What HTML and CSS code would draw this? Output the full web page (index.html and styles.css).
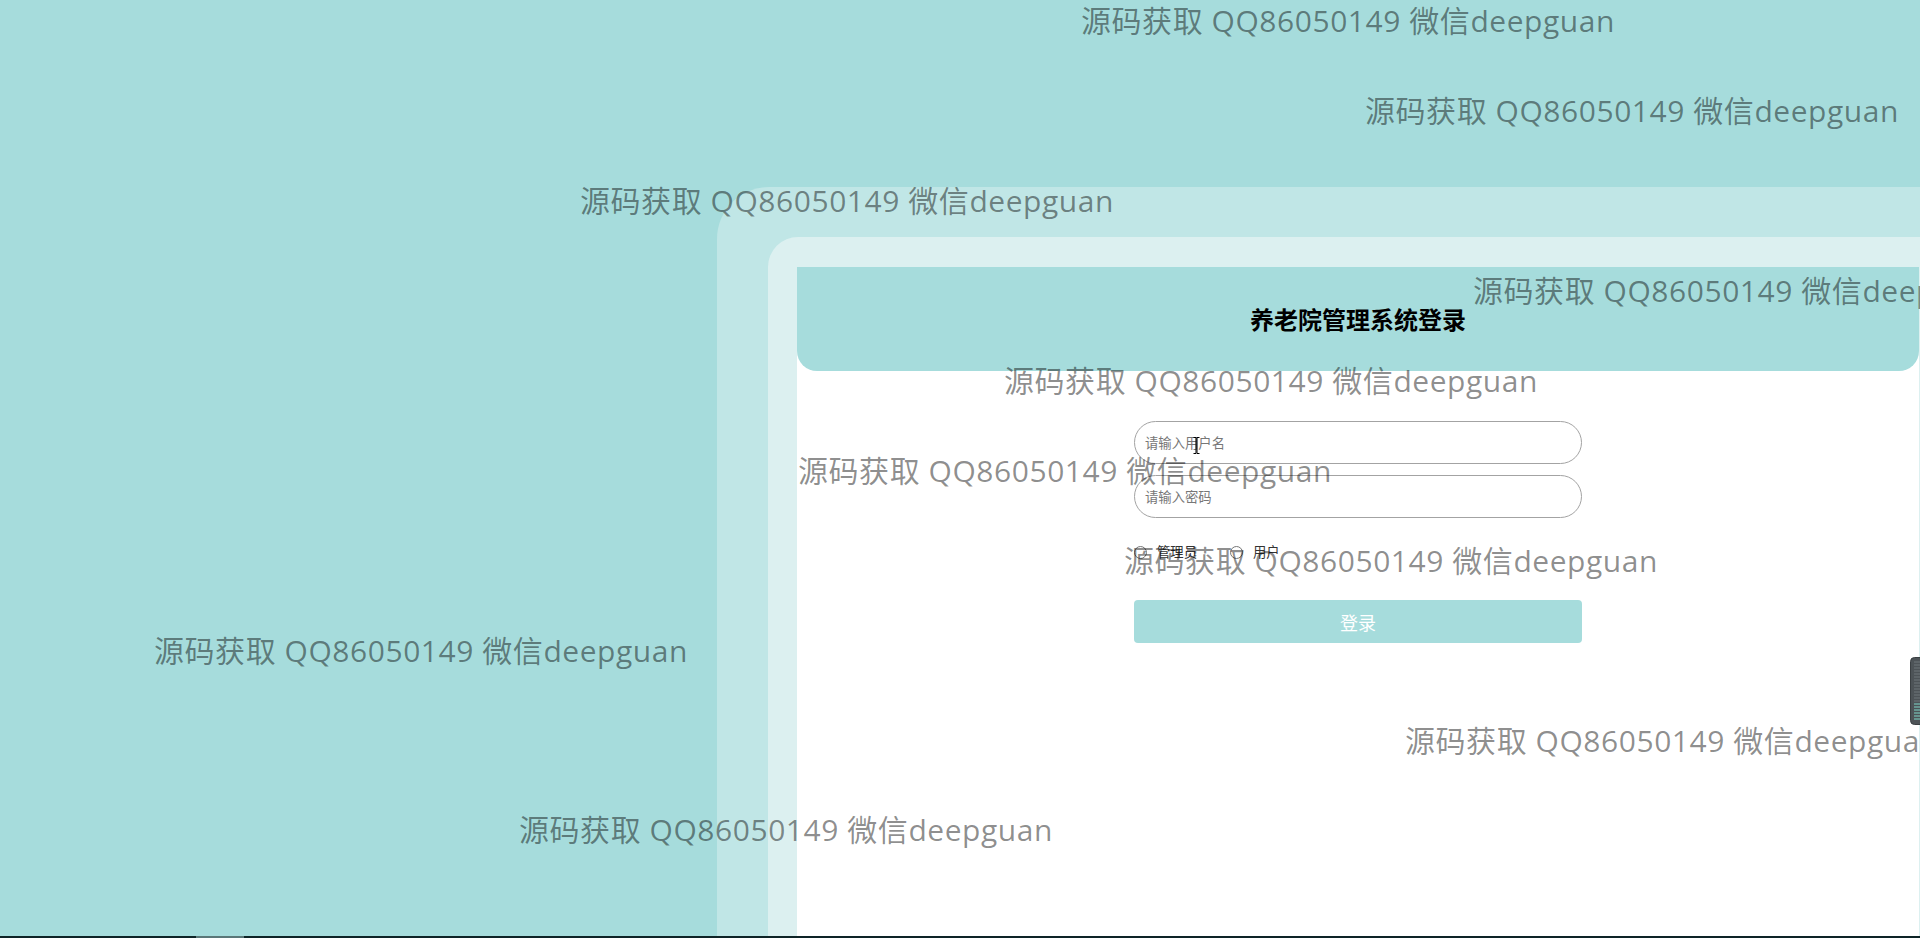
FILE: index.html
```html
<!DOCTYPE html>
<html lang="zh-CN">
<head>
<meta charset="utf-8">
<title>养老院管理系统登录</title>
<link rel="stylesheet" href="styles.css">
</head>
<body>
<div class="page">
  <div class="frame-outer">
    <div class="frame-inner">
      <div class="card">
        <div class="card-head"><h2 class="title">养老院管理系统登录</h2></div>
        <form class="login-form">
          <input class="field" type="text" placeholder="请输入用户名">
          <input class="field" type="password" placeholder="请输入密码">
          <div class="roles">
            <label class="role"><input class="radio" type="radio" name="role"><span>管理员</span></label>
            <label class="role"><input class="radio" type="radio" name="role"><span>用户</span></label>
          </div>
          <button class="submit" type="button">登录</button>
        </form>
      </div>
    </div>
  </div>
</div>

<div class="watermarks">
  <span class="wm wm1">源码获取 QQ86050149 微信deepguan</span>
  <span class="wm wm2">源码获取 QQ86050149 微信deepguan</span>
  <span class="wm wm3">源码获取 QQ86050149 微信deepguan</span>
  <span class="wm wm4">源码获取 QQ86050149 微信deepguan</span>
  <span class="wm wm5">源码获取 QQ86050149 微信deepguan</span>
  <span class="wm wm6">源码获取 QQ86050149 微信deepguan</span>
  <span class="wm wm7">源码获取 QQ86050149 微信deepguan</span>
  <span class="wm wm8">源码获取 QQ86050149 微信deepguan</span>
  <span class="wm wm9">源码获取 QQ86050149 微信deepguan</span>
  <span class="wm wm10">源码获取 QQ86050149 微信deepguan</span>
</div>

<svg class="cursor" width="7" height="17" viewBox="0 0 7 17">
  <path d="M0.5 0.5h2.5v16h-2.5M6.5 0.5h-2.5v16h2.5" fill="none" stroke="#000" stroke-width="1"/>
</svg>

<svg class="side-widget" width="10" height="68" viewBox="0 0 10 68">
  <rect x="0.5" y="0.5" width="14" height="67" rx="4" fill="#4d5357" stroke="#3a3f42"/>
  <g stroke="#6f767b" stroke-width="1">
    <path d="M4 5h6M4 8h6M4 11h6M4 14h6M4 17h6M4 20h6M4 23h6M4 26h6M4 29h6M4 32h6M4 35h6M4 38h6M4 41h6M4 44h6"/>
  </g>
  <g stroke="#7fd6c8" stroke-width="1">
    <path d="M4 47h6M4 50h6M4 53h6M4 56h6M4 59h6M4 62h6"/>
  </g>
</svg>

<div class="taskbar-edge"><span class="taskbar-mark"></span></div>
</body>
</html>
```

FILE: styles.css
```css
html, body {
  margin: 0;
  padding: 0;
}

body {
  width: 1920px;
  height: 938px;
  overflow: hidden;
  position: relative;
  background: #a6dcdc;
  font-family: "Noto Sans CJK SC", "Noto Sans", sans-serif;
}

.page {
  box-sizing: border-box;
  width: 1920px;
  height: 938px;
  overflow: hidden;
  padding: 187px 0 0 717px;
}

.frame-outer {
  width: 1282px;
  box-sizing: border-box;
  background: #c0e6e6;
  border-top-left-radius: 52px;
  padding: 50px 50px 0 51px;
}

.frame-inner {
  background: #dcf0f0;
  border-top-left-radius: 30px;
  padding: 30px 30px 0 29px;
}

.card {
  width: 1122px;
  min-height: 720px;
  background: #ffffff;
}

.card-head {
  height: 104px;
  background: #a6dcdc;
  border-radius: 0 0 20px 20px;
  display: flex;
  align-items: center;
  justify-content: center;
}

.title {
  margin: 0;
  font-size: 24px;
  font-weight: 700;
  color: #000;
  line-height: 1;
}

.login-form {
  width: 448px;
  margin: 50px auto 0;
  display: flex;
  flex-direction: column;
}

.field {
  box-sizing: border-box;
  height: 43px;
  margin: 0 0 11px;
  padding: 0 10px;
  border: 1px solid #a3a3a3;
  border-radius: 22px;
  font-family: "Noto Sans CJK SC", sans-serif;
  font-size: 13.333px;
  color: #333;
  background: #fff;
  outline: none;
}

.field::placeholder {
  color: #777;
}

.roles {
  display: flex;
  align-items: center;
  height: 14px;
  margin-top: 16px;
}

.role {
  display: flex;
  align-items: center;
  font-size: 13.333px;
  line-height: 14px;
  color: #333;
}

.role + .role {
  margin-left: 33px;
}

.radio {
  appearance: none;
  -webkit-appearance: none;
  box-sizing: border-box;
  width: 13px;
  height: 13px;
  margin: 0 10px 0 0;
  border: 1px solid #767676;
  border-radius: 50%;
  background: #fff;
}

.submit {
  height: 43px;
  margin-top: 41px;
  border: 0;
  border-radius: 4px;
  background: #a6dcdc;
  color: #fff;
  font-family: "Noto Sans CJK SC", sans-serif;
  font-size: 18px;
  cursor: pointer;
}

.watermarks {
  position: absolute;
  inset: 0;
  pointer-events: none;
}

.wm {
  position: absolute;
  white-space: nowrap;
  font-family: "Open Sans", "Noto Sans CJK SC", sans-serif;
  font-size: 30px;
  line-height: 30px;
  letter-spacing: 0.55px;
  color: rgba(0, 0, 0, 0.45);
}

.wm1 { left: 1081px; top: 6px; }
.wm2 { left: 1365px; top: 96px; }
.wm3 { left: 580px; top: 186px; }
.wm4 { left: 1473px; top: 276px; }
.wm5 { left: 1004px; top: 366px; }
.wm6 { left: 798px; top: 456px; }
.wm7 { left: 1124px; top: 546px; }
.wm8 { left: 154px; top: 636px; }
.wm9 { left: 1405px; top: 726px; }
.wm10 { left: 519px; top: 815px; }

.cursor {
  position: absolute;
  left: 1193px;
  top: 437px;
}

.side-widget {
  position: absolute;
  right: 0;
  top: 657px;
}

.taskbar-edge {
  position: absolute;
  left: 0;
  right: 0;
  bottom: 0;
  height: 2px;
  background: #0e2427;
}

.taskbar-mark {
  position: absolute;
  left: 196px;
  width: 48px;
  top: 0;
  bottom: 0;
  background: #5a7778;
}
```
